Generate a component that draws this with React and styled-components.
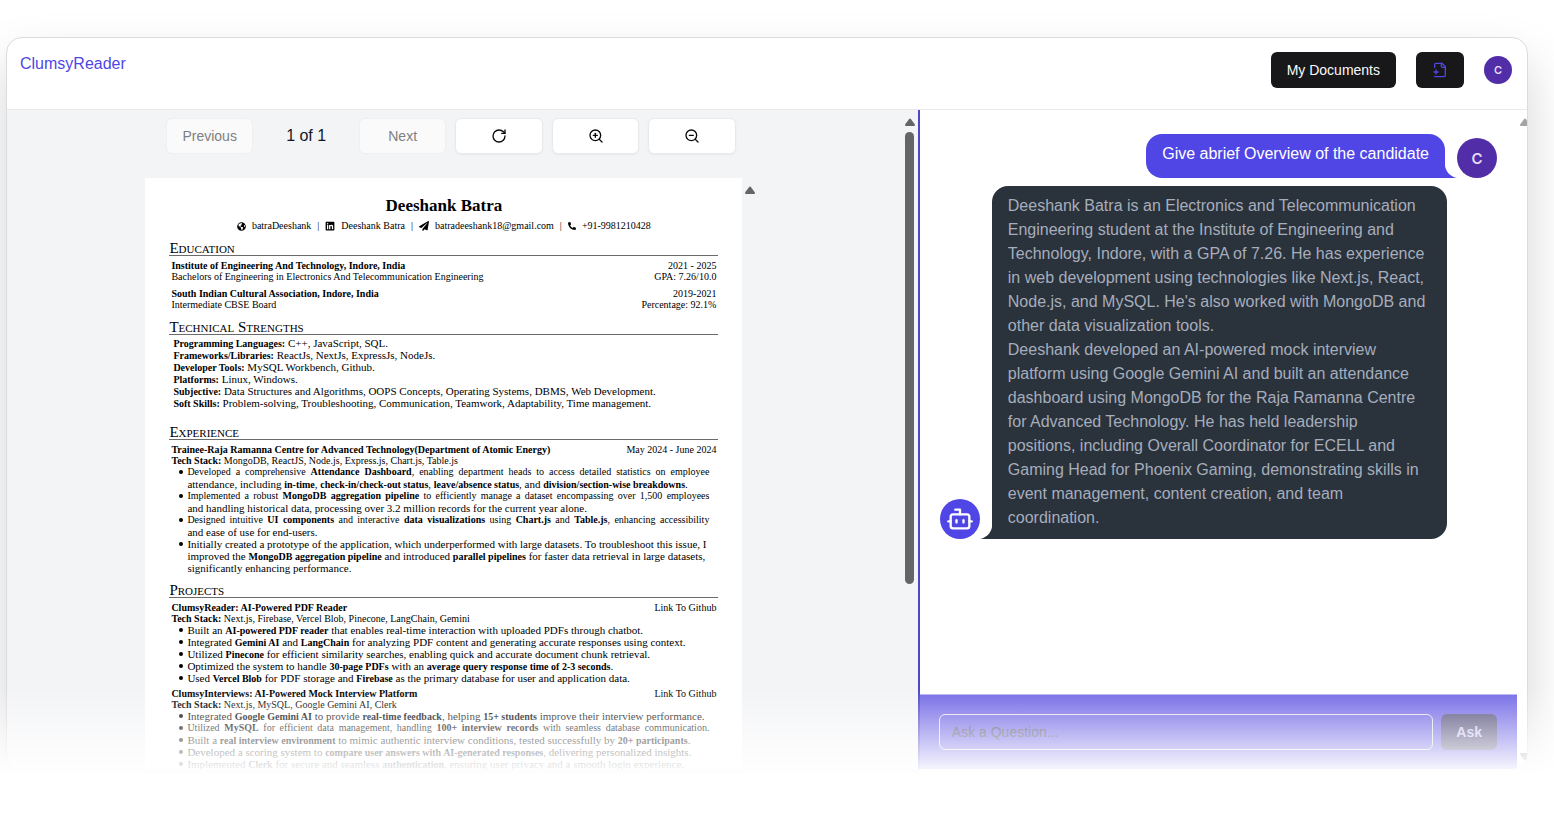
import React from "react";
import styled, { createGlobalStyle, css } from "styled-components";
import { Bot, RotateCw, ZoomIn, ZoomOut } from "lucide-react";
import { FaGlobeAmericas, FaLinkedin, FaPaperPlane, FaPhoneAlt } from "react-icons/fa";

const GlobalStyle = createGlobalStyle`
  *, *::before, *::after { box-sizing: border-box; }
  html, body, #root { height: 100%; }
  body {
    margin: 0;
    background: #fff;
    color: #111827;
    font: 16px/24px "Liberation Sans", Arial, sans-serif;
    overflow: hidden;
  }
  h1, h2, h3, p, ul { margin: 0; padding: 0; font-weight: inherit; }
  button, input { font: inherit; }
`;

const Stage = styled.div`
  position: relative;
  height: 100%;
  padding: 37px 26px 47px 6px;
  overflow: hidden;

  &::after {
    content: "";
    position: absolute;
    inset: auto 0 0;
    height: 128px;
    background: linear-gradient(to bottom, rgba(255, 255, 255, 0), #fff 86px);
    pointer-events: none;
  }
`;

const Frame = styled.div`
  display: flex;
  flex-direction: column;
  height: 100%;
  border: 1px solid #dcdcde;
  border-radius: 16px;
  background: #fff;
  box-shadow: 0 25px 50px rgba(0, 0, 0, 0.17);
  overflow: hidden;
`;

const Header = styled.header`
  display: flex;
  justify-content: space-between;
  align-items: flex-start;
  flex: none;
  min-height: 72px;
  padding: 14px 15px 14px 13px;
  border-bottom: 1px solid #e8e9eb;
`;

const Brand = styled.a`
  color: #4f46e5;
  text-decoration: none;
`;

const Actions = styled.nav`
  display: flex;
  align-items: center;
  gap: 20px;
`;

const DarkButton = styled.button`
  display: flex;
  align-items: center;
  justify-content: center;
  height: 36px;
  padding: 0 16px;
  border: 0;
  border-radius: 6px;
  background: #18181b;
  color: #fafafa;
  font-size: 14px;
  line-height: 20px;
`;

const Avatar = styled.div`
  display: flex;
  align-items: center;
  justify-content: center;
  flex: none;
  width: ${(p) => p.$size}px;
  height: ${(p) => p.$size}px;
  border-radius: 50%;
  background: ${(p) => (p.$bot ? "#4f46e5" : "#512da8")};
  color: ${(p) => (p.$bot ? "#fff" : "#e6dcf8")};
  font: 600 ${(p) => (p.$size > 30 ? 15 : 11)}px/1 Inter, sans-serif;
`;

const Main = styled.main`
  display: flex;
  flex: 1;
  min-height: 0;
`;

const Viewer = styled.section`
  display: flex;
  flex: 60 1 0;
  min-width: 0;
  background: #f3f4f6;
`;

const ViewerBody = styled.div`
  display: flex;
  flex: 1;
  flex-direction: column;
  align-items: center;
  min-width: 0;
  padding: 8px 7px 0 0;
`;

const Toolbar = styled.div`
  display: grid;
  grid-template-columns: repeat(6, 1fr);
  align-items: center;
  gap: 9px;
  flex: none;
  width: 570px;
`;

const ToolButton = styled.button`
  display: flex;
  align-items: center;
  justify-content: center;
  height: 36px;
  padding: 0;
  border: 1px solid #e9eaec;
  border-radius: 6px;
  background: #fff;
  color: #09090b;
  font-size: 14px;
  line-height: 20px;
  box-shadow: 0 1px 2px rgba(0, 0, 0, 0.05);

  &:disabled {
    border-color: #eeeff1;
    background: #fafafb;
    color: #7e7f81;
    box-shadow: none;
  }
`;

const PageCount = styled.span`
  text-align: center;
`;

const PageArea = styled.div`
  display: flex;
  flex: 1;
  gap: 2px;
  min-height: 0;
  margin-top: 24px;
  overflow: hidden;
`;

const Paper = styled.article`
  width: 597px;
  padding: 18px 24px 0;
  background: #fff;
  color: #000;
  font: 11px/12px "Liberation Serif", "Times New Roman", serif;
  white-space: nowrap;
  overflow: hidden;

  b { font-size: 10px; line-height: 8px; }
`;

const Name = styled.h1`
  font-size: 17px;
  font-weight: 700;
  line-height: 20px;
  text-align: center;
`;

const Contacts = styled.div`
  display: flex;
  align-items: center;
  justify-content: center;
  gap: 6px;
  margin-top: 3px;
  font-size: 10px;
  line-height: 14px;
`;

const Block = styled.section`
  margin-top: ${(p) => p.$gap || 9}px;
`;

const BlockTitle = styled.h2`
  border-bottom: 1px solid #6b6b6b;
  font-size: 15px;
  font-variant: small-caps;
  line-height: 14px;
`;

const Entry = styled.div`
  padding: ${(p) => (p.$spaced ? 6 : 4)}px 2px 0;
`;

const Row = styled.div`
  display: flex;
  justify-content: space-between;
  line-height: 11px;
  font-weight: ${(p) => (p.$strong ? 700 : 400)};
  font-size: 10px;
`;

const Aside = styled.span`
  font-weight: 400;
`;

const Skills = styled.div`
  padding: 2px 4px 7px;
`;

const Bullets = styled.ul`
  padding: 0 7px 0 16px;
  list-style: none;
`;

const Bullet = styled.li`
  position: relative;

  &::before {
    content: "";
    position: absolute;
    left: -8px;
    top: 4px;
    width: 4px;
    height: 4px;
    border-radius: 50%;
    background: #000;
  }
`;

const Line = styled.div`
  ${(p) => p.$tight && css`font-size: 10px; text-align-last: justify;`}
`;

const ScrollTrack = styled.div`
  display: flex;
  flex-direction: column;
  align-items: center;
  flex: none;
  gap: 6px;
  width: ${(p) => p.$width}px;
  padding: 8px 0;
  overflow: hidden;
  ${(p) => p.$clipped && css`align-items: flex-start; padding-left: 3px;`}
`;

const Arrow = styled.svg`
  flex: none;
  width: 10px;
  height: 8px;
  fill: ${(p) => p.$color};
  ${(p) => p.$down && css`
    margin-top: auto;
    transform: rotate(180deg);
  `}
`;

const Thumb = styled.span`
  width: 9px;
  height: 452px;
  max-height: 80%;
  border-radius: 5px;
  background: #636567;
`;

const Chat = styled.section`
  display: flex;
  flex: 40 1 0;
  min-width: 0;
  border-left: 2px solid #4f46c8;
`;

const ChatBody = styled.div`
  display: flex;
  flex: 1;
  flex-direction: column;
  min-width: 0;
`;

const Messages = styled.div`
  display: flex;
  flex: 1;
  flex-direction: column;
  gap: 8px;
  min-height: 0;
  padding: 24px 20px 0;
`;

const Message = styled.div`
  display: flex;
  align-items: flex-end;
  justify-content: ${(p) => (p.$mine ? "flex-end" : "flex-start")};
  gap: 12px;
`;

const Bubble = styled.div`
  position: relative;
  max-width: 455px;
  padding: ${(p) => (p.$mine ? "8px 16px 12px" : "8px 20px 9px 16px")};
  border-radius: ${(p) => (p.$mine ? "16px 16px 0 16px" : "16px 16px 16px 0")};
  background: ${(p) => (p.$mine ? "#4f46e5" : "#2a323c")};
  color: ${(p) => (p.$mine ? "#fff" : "#a6adbb")};
`;

const Tail = styled.svg`
  position: absolute;
  bottom: 0;
  ${(p) => (p.$mine ? "left: 100%;" : "right: 100%;")}
  width: 12px;
  height: 12px;
  fill: ${(p) => (p.$mine ? "#4f46e5" : "#2a323c")};
`;

const AskForm = styled.form`
  display: flex;
  flex: none;
  gap: 8px;
  padding: 19px 20px 19px 19px;
  border-top: 1px solid #b9b4f2;
  background: #746ae6;
`;

const Question = styled.input`
  flex: 1;
  min-width: 0;
  height: 36px;
  padding: 0 12px;
  border: 1px solid #e4e4e7;
  border-radius: 6px;
  background: transparent;
  font-size: 14px;
  outline: 0;

  &::placeholder { color: #4c4c5c; opacity: 1; }
`;

const AskButton = styled(DarkButton)`
  padding: 0 15px;
  background: #55517c;
  color: #ccc8f0;
  font-weight: 700;
`;

const experience = [
  [
    { tight: true, text: <>Developed a comprehensive <b>Attendance Dashboard</b>, enabling department heads to access detailed statistics on employee</> },
    { text: <>attendance, including <b>in-time</b>, <b>check-in/check-out status</b>, <b>leave/absence status</b>, and <b>division/section-wise breakdowns</b>.</> },
  ],
  [
    { tight: true, text: <>Implemented a robust <b>MongoDB aggregation pipeline</b> to efficiently manage a dataset encompassing over 1,500 employees</> },
    { text: <>and handling historical data, processing over 3.2 million records for the current year alone.</> },
  ],
  [
    { tight: true, text: <>Designed intuitive <b>UI components</b> and interactive <b>data visualizations</b> using <b>Chart.js</b> and <b>Table.js</b>, enhancing accessibility</> },
    { text: <>and ease of use for end-users.</> },
  ],
  [
    { text: <>Initially created a prototype of the application, which underperformed with large datasets. To troubleshoot this issue, I</> },
    { text: <>improved the <b>MongoDB aggregation pipeline</b> and introduced <b>parallel pipelines</b> for faster data retrieval in large datasets,</> },
    { text: <>significantly enhancing performance.</> },
  ],
];

const reader = [
  [{ text: <>Built an <b>AI-powered PDF reader</b> that enables real-time interaction with uploaded PDFs through chatbot.</> }],
  [{ text: <>Integrated <b>Gemini AI</b> and <b>LangChain</b> for analyzing PDF content and generating accurate responses using context.</> }],
  [{ text: <>Utilized <b>Pinecone</b> for efficient similarity searches, enabling quick and accurate document chunk retrieval.</> }],
  [{ text: <>Optimized the system to handle <b>30-page PDFs</b> with an <b>average query response time of 2-3 seconds</b>.</> }],
  [{ text: <>Used <b>Vercel Blob</b> for PDF storage and <b>Firebase</b> as the primary database for user and application data.</> }],
];

const interviews = [
  [{ text: <>Integrated <b>Google Gemini AI</b> to provide <b>real-time feedback</b>, helping <b>15+ students</b> improve their interview performance.</> }],
  [{ tight: true, text: <>Utilized <b>MySQL</b> for efficient data management, handling <b>100+ interview records</b> with seamless database communication.</> }],
  [{ text: <>Built a <b>real interview environment</b> to mimic authentic interview conditions, tested successfully by <b>20+ participants</b>.</> }],
  [{ text: <>Developed a scoring system to <b>compare user answers with AI-generated responses</b>, delivering personalized insights.</> }],
  [{ text: <>Implemented <b>Clerk</b> for secure and seamless <b>authentication</b>, ensuring user privacy and a smooth login experience.</> }],
];

const skills = [
  ["Programming Languages:", "C++, JavaScript, SQL."],
  ["Frameworks/Libraries:", "ReactJs, NextJs, ExpressJs, NodeJs."],
  ["Developer Tools:", "MySQL Workbench, Github."],
  ["Platforms:", "Linux, Windows."],
  ["Subjective:", "Data Structures and Algorithms, OOPS Concepts, Operating Systems, DBMS, Web Development."],
  ["Soft Skills:", "Problem-solving, Troubleshooting, Communication, Teamwork, Adaptability, Time management."],
];

function BulletList({ items }) {
  return (
    <Bullets>
      {items.map((lines, i) => (
        <Bullet key={i}>
          {lines.map((line, j) => (
            <Line key={j} $tight={line.tight}>{line.text}</Line>
          ))}
        </Bullet>
      ))}
    </Bullets>
  );
}

function Project({ title, side, stack, items }) {
  return (
    <Entry>
      <Row $strong><span>{title}</span><Aside>{side}</Aside></Row>
      <Row><span><b>Tech Stack:</b> {stack}</span></Row>
      <BulletList items={items} />
    </Entry>
  );
}

function Resume() {
  return (
    <Paper>
      <Name>Deeshank Batra</Name>
      <Contacts>
        <FaGlobeAmericas size={9} /><span>batraDeeshank</span>|
        <FaLinkedin size={10} /><span>Deeshank Batra</span>|
        <FaPaperPlane size={10} /><span>batradeeshank18@gmail.com</span>|
        <FaPhoneAlt size={8} /><span>+91-9981210428</span>
      </Contacts>

      <Block $gap={8}>
        <BlockTitle>Education</BlockTitle>
        <Entry>
          <Row $strong><span>Institute of Engineering And Technology, Indore, India</span><Aside>2021 - 2025</Aside></Row>
          <Row><span>Bachelors of Engineering in Electronics And Telecommunication Engineering</span><Aside>GPA: 7.26/10.0</Aside></Row>
        </Entry>
        <Entry $spaced>
          <Row $strong><span>South Indian Cultural Association, Indore, India</span><Aside>2019-2021</Aside></Row>
          <Row><span>Intermediate CBSE Board</span><Aside>Percentage: 92.1%</Aside></Row>
        </Entry>
      </Block>

      <Block $gap={10}>
        <BlockTitle>Technical Strengths</BlockTitle>
        <Skills>
          {skills.map(([label, text]) => (
            <div key={label}><b>{label}</b> {text}</div>
          ))}
        </Skills>
      </Block>

      <Block>
        <BlockTitle>Experience</BlockTitle>
        <Project
          title="Trainee-Raja Ramanna Centre for Advanced Technology(Department of Atomic Energy)"
          side="May 2024 - June 2024"
          stack="MongoDB, ReactJS, Node.js, Express.js, Chart.js, Table.js"
          items={experience}
        />
      </Block>

      <Block>
        <BlockTitle>Projects</BlockTitle>
        <Project
          title="ClumsyReader: AI-Powered PDF Reader"
          side="Link To Github"
          stack="Next.js, Firebase, Vercel Blob, Pinecone, LangChain, Gemini"
          items={reader}
        />
        <Project
          title="ClumsyInterviews: AI-Powered Mock Interview Platform"
          side="Link To Github"
          stack="Next.js, MySQL, Google Gemini AI, Clerk"
          items={interviews}
        />
      </Block>
    </Paper>
  );
}

function ScrollArrow({ color, down }) {
  return (
    <Arrow $color={color} $down={down} viewBox="0 0 10 8" aria-hidden="true">
      <path d="M4 1.2Q5 0 6 1.2L9.6 6Q10.6 8 9 8H1Q-.6 8 .4 6Z" />
    </Arrow>
  );
}

function FilePlusIcon() {
  return (
    <svg width="16" height="16" viewBox="0 0 24 24" fill="none" stroke="#4f46e5" strokeWidth="2" strokeLinecap="round" strokeLinejoin="round" aria-hidden="true">
      <path d="M4 22h14a2 2 0 0 0 2-2V7l-5-5H6a2 2 0 0 0-2 2v4" />
      <path d="M14 2v4a2 2 0 0 0 2 2h4" />
      <path d="M3 15h6" />
      <path d="M6 12v6" />
    </svg>
  );
}

export default function App() {
  return (
    <>
      <GlobalStyle />
      <Stage>
        <Frame>
          <Header>
            <Brand href="#">ClumsyReader</Brand>
            <Actions>
              <DarkButton type="button">My Documents</DarkButton>
              <DarkButton type="button" aria-label="Add document"><FilePlusIcon /></DarkButton>
              <Avatar $size={28}>C</Avatar>
            </Actions>
          </Header>
          <Main>
            <Viewer>
              <ViewerBody>
                <Toolbar>
                  <ToolButton type="button" disabled>Previous</ToolButton>
                  <PageCount>1 of 1</PageCount>
                  <ToolButton type="button" disabled>Next</ToolButton>
                  <ToolButton type="button" aria-label="Rotate"><RotateCw size={16} /></ToolButton>
                  <ToolButton type="button" aria-label="Zoom in"><ZoomIn size={16} /></ToolButton>
                  <ToolButton type="button" aria-label="Zoom out"><ZoomOut size={16} /></ToolButton>
                </Toolbar>
                <PageArea>
                  <Resume />
                  <ScrollTrack $width={12}><ScrollArrow color="#636567" /></ScrollTrack>
                </PageArea>
              </ViewerBody>
              <ScrollTrack $width={16}>
                <ScrollArrow color="#636567" />
                <Thumb />
              </ScrollTrack>
            </Viewer>
            <Chat>
              <ChatBody>
                <Messages>
                  <Message $mine>
                    <Bubble $mine>
                      Give abrief Overview of the candidate
                      <Tail $mine viewBox="0 0 12 12" aria-hidden="true"><path d="M0 0C1 6 6 11 12 12H0Z" /></Tail>
                    </Bubble>
                    <Avatar $size={40}>C</Avatar>
                  </Message>
                  <Message>
                    <Avatar $size={40} $bot><Bot size={28} /></Avatar>
                    <Bubble>
                      <p>
                        Deeshank Batra is an Electronics and Telecommunication Engineering student at the Institute of
                        Engineering and Technology, Indore, with a GPA of 7.26. He has experience in web development
                        using technologies like Next.js, React, Node.js, and MySQL. He's also worked with MongoDB and
                        other data visualization tools.
                      </p>
                      <p>
                        Deeshank developed an AI-powered mock interview platform using Google Gemini AI and built an
                        attendance dashboard using MongoDB for the Raja Ramanna Centre for Advanced Technology. He has
                        held leadership positions, including Overall Coordinator for ECELL and Gaming Head for Phoenix
                        Gaming, demonstrating skills in event management, content creation, and team coordination.
                      </p>
                      <Tail viewBox="0 0 12 12" aria-hidden="true"><path d="M12 0C11 6 6 11 0 12H12Z" /></Tail>
                    </Bubble>
                  </Message>
                </Messages>
                <AskForm onSubmit={(e) => e.preventDefault()}>
                  <Question placeholder="Ask a Question..." aria-label="Ask a Question" />
                  <AskButton type="submit">Ask</AskButton>
                </AskForm>
              </ChatBody>
              <ScrollTrack $width={10} $clipped>
                <ScrollArrow color="#a3a3a5" />
                <ScrollArrow color="#a3a3a5" down />
              </ScrollTrack>
            </Chat>
          </Main>
        </Frame>
      </Stage>
    </>
  );
}
